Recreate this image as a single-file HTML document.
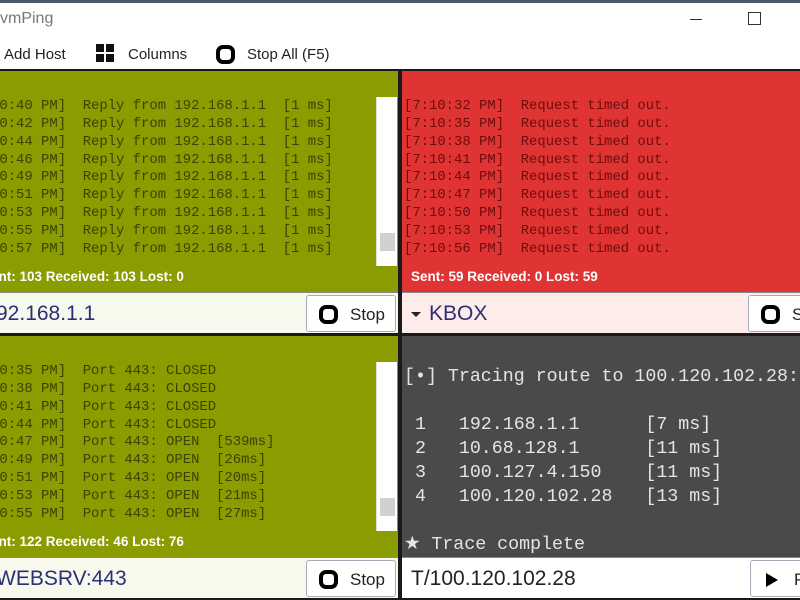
<!DOCTYPE html>
<html><head><meta charset="utf-8"><style>
*{margin:0;padding:0;box-sizing:border-box}
body{width:800px;height:600px;overflow:hidden;background:#fff;font-family:"Liberation Sans",sans-serif;position:relative}
.abs{position:absolute}
.mono{font-family:"Liberation Mono",monospace;white-space:pre}
.log{font-size:13.9px;line-height:17.85px}
.sb{position:absolute;width:21px;background:#fff;border-left:1px solid #ddd}
.sb .th{position:absolute;left:3px;width:15px;background:#d0d0d0}
.bar{position:absolute;height:41px;border-top:1px solid #888}
.host{position:absolute;top:9px;font-size:21px;color:#2b2f78}
.btn{position:absolute;top:2px;height:37px;background:#fff;border:1px solid #aab;border-radius:3px;font-size:17px;color:#222}
.ico{position:absolute;left:12px;top:9px;width:19px;height:19px;border:4px solid #000;border-radius:7px}
.stat{position:absolute;font-weight:bold;color:#fff;font-size:13.5px}
</style></head><body>
<div class="abs" style="left:0;top:0;width:800px;height:3px;background:#4a5a6a"></div>
<div class="abs" style="left:0;top:10px;font-size:16px;color:#777">vmPing</div>
<div class="abs" style="left:690px;top:19px;width:12px;height:1px;background:#333"></div>
<div class="abs" style="left:748px;top:12px;width:13px;height:13px;border:1px solid #333"></div>
<div class="abs" style="left:4px;top:46px;font-size:15px;color:#222">Add Host</div>
<div class="abs" style="left:96px;top:44px;width:8px;height:8px;background:#111"></div>
<div class="abs" style="left:106px;top:44px;width:8px;height:8px;background:#111"></div>
<div class="abs" style="left:96px;top:54px;width:8px;height:8px;background:#111"></div>
<div class="abs" style="left:106px;top:54px;width:8px;height:8px;background:#111"></div>
<div class="abs" style="left:128px;top:46px;font-size:15px;color:#222">Columns</div>
<div class="abs" style="left:216px;top:45px;width:19px;height:19px;border:4px solid #000;border-radius:7px"></div>
<div class="abs" style="left:247px;top:46px;font-size:15px;color:#222">Stop All (F5)</div>
<div class="abs" style="left:0;top:69px;width:800px;height:531px;background:#1a1a1a"></div>

<!-- top-left -->
<div class="abs" style="left:0;top:71px;width:398px;height:221px;background:#8a9c00;overflow:hidden">
<div class="abs mono log" style="left:-34px;top:27px;color:#3a4300">[7:10:40 PM]  Reply from 192.168.1.1  [1 ms]
[7:10:42 PM]  Reply from 192.168.1.1  [1 ms]
[7:10:44 PM]  Reply from 192.168.1.1  [1 ms]
[7:10:46 PM]  Reply from 192.168.1.1  [1 ms]
[7:10:49 PM]  Reply from 192.168.1.1  [1 ms]
[7:10:51 PM]  Reply from 192.168.1.1  [1 ms]
[7:10:53 PM]  Reply from 192.168.1.1  [1 ms]
[7:10:55 PM]  Reply from 192.168.1.1  [1 ms]
[7:10:57 PM]  Reply from 192.168.1.1  [1 ms]</div>
<div class="sb" style="left:376px;top:26px;height:169px"><div class="th" style="top:136px;height:18px"></div></div>
<div class="stat" style="left:-18px;top:198px">Sent: 103 Received: 103 Lost: 0</div>
</div>
<div class="bar" style="left:0;top:292px;width:398px;background:#f7f9ec"><div class="host" style="left:-4px">92.168.1.1</div>
<div class="btn" style="left:306px;width:90px"><div class="ico"></div><span class="abs" style="left:43px;top:9px">Stop</span></div></div>

<!-- top-right -->
<div class="abs" style="left:402px;top:71px;width:398px;height:221px;background:#e03434;overflow:hidden">
<div class="abs mono log" style="left:2px;top:27px;color:#6e0c0c">[7:10:32 PM]  Request timed out.
[7:10:35 PM]  Request timed out.
[7:10:38 PM]  Request timed out.
[7:10:41 PM]  Request timed out.
[7:10:44 PM]  Request timed out.
[7:10:47 PM]  Request timed out.
[7:10:50 PM]  Request timed out.
[7:10:53 PM]  Request timed out.
[7:10:56 PM]  Request timed out.</div>
<div class="stat" style="left:9px;top:198px">Sent: 59 Received: 0 Lost: 59</div>
</div>
<div class="bar" style="left:402px;top:292px;width:398px;background:#fdecea">
<div class="abs" style="left:9px;top:19px;width:0;height:0;border-left:5px solid transparent;border-right:5px solid transparent;border-top:5px solid #222"></div>
<div class="host" style="left:27px">KBOX</div>
<div class="btn" style="left:346px;width:90px"><div class="ico"></div><span class="abs" style="left:43px;top:9px">Stop</span></div></div>

<!-- bottom-left -->
<div class="abs" style="left:0;top:336px;width:398px;height:221px;background:#8a9c00;overflow:hidden">
<div class="abs mono log" style="left:-34px;top:27px;color:#3a4300">[7:10:35 PM]  Port 443: CLOSED
[7:10:38 PM]  Port 443: CLOSED
[7:10:41 PM]  Port 443: CLOSED
[7:10:44 PM]  Port 443: CLOSED
[7:10:47 PM]  Port 443: OPEN  [539ms]
[7:10:49 PM]  Port 443: OPEN  [26ms]
[7:10:51 PM]  Port 443: OPEN  [20ms]
[7:10:53 PM]  Port 443: OPEN  [21ms]
[7:10:55 PM]  Port 443: OPEN  [27ms]</div>
<div class="sb" style="left:376px;top:26px;height:169px"><div class="th" style="top:136px;height:18px"></div></div>
<div class="stat" style="left:-18px;top:198px">Sent: 122 Received: 46 Lost: 76</div>
</div>
<div class="bar" style="left:0;top:557px;width:398px;background:#f7f9ec"><div class="host" style="left:-4px">WEBSRV:443</div>
<div class="btn" style="left:306px;width:90px"><div class="ico"></div><span class="abs" style="left:43px;top:9px">Stop</span></div></div>

<!-- bottom-right -->
<div class="abs" style="left:402px;top:336px;width:398px;height:221px;background:#4a4a4a;overflow:hidden">
<div class="abs mono" style="left:2px;top:29px;font-size:18.3px;line-height:24px;color:#e4e4e4">[•] Tracing route to 100.120.102.28:

 1   192.168.1.1      [7 ms]
 2   10.68.128.1      [11 ms]
 3   100.127.4.150    [11 ms]
 4   100.120.102.28   [13 ms]

★ Trace complete</div>
</div>
<div class="bar" style="left:402px;top:557px;width:398px;background:#fff"><div class="host" style="left:9px;color:#222">T/100.120.102.28</div>
<div class="btn" style="left:348px;width:90px"><div class="abs" style="left:15px;top:12px;width:0;height:0;border-top:7px solid transparent;border-bottom:7px solid transparent;border-left:12px solid #000"></div><span class="abs" style="left:43px;top:9px">Ping</span></div></div>
</body></html>
